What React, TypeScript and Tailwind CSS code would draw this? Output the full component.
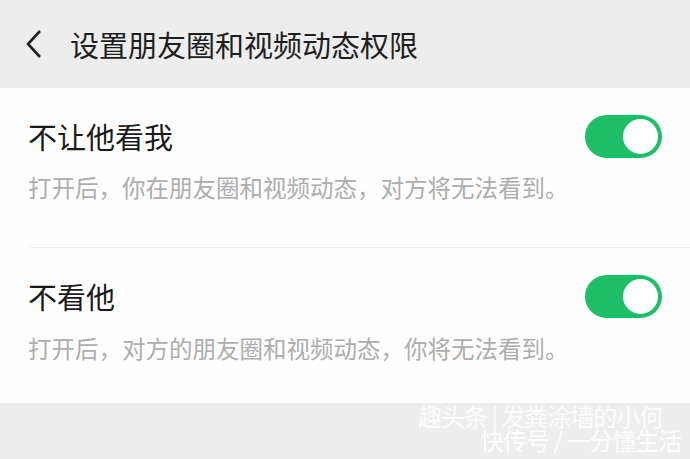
import React from "react";

const font = { fontFamily: '"Noto Sans CJK SC", "Noto Sans", sans-serif' };

function Toggle() {
  return (
    <div className="relative w-[77px] h-[43px] rounded-full bg-[#1dbf68]">
      <div className="absolute right-[2px] top-[2px] w-[39px] h-[39px] rounded-full bg-white border-[2px] border-[#1dbf68]" />
    </div>
  );
}

function Row({ title, desc }: { title: string; desc: string }) {
  return (
    <div className="pl-[28px] pr-[28px]">
      <div className="flex items-center justify-between h-[44px]">
        <span className="text-[29px] leading-none text-[#1a1a1a]">{title}</span>
        <Toggle />
      </div>
      <div className="mt-[18px] text-[23.5px] leading-none text-[#adadad]">{desc}</div>
    </div>
  );
}

export default function App() {
  return (
    <div className="w-[690px] h-[459px] bg-[#ededed] overflow-hidden relative" style={font}>
      <div className="h-[88px] flex items-center pl-[24px]">
        <svg width="20" height="30" viewBox="0 0 20 30" className="mr-[26px]">
          <path d="M16 2 L4 15 L16 28" fill="none" stroke="#222" strokeWidth="2.6" />
        </svg>
        <span className="text-[29px] leading-none text-[#1e1e1e]">设置朋友圈和视频动态权限</span>
      </div>
      <div className="bg-[#fefefe] h-[315px] flex flex-col">
        <div className="pt-[26px]">
          <Row title="不让他看我" desc="打开后，你在朋友圈和视频动态，对方将无法看到。" />
        </div>
        <div className="mt-[47px] ml-[30px] h-[1px] bg-[#ececec]" />
        <div className="pt-[27px]">
          <Row title="不看他" desc="打开后，对方的朋友圈和视频动态，你将无法看到。" />
        </div>
      </div>
      <div className="absolute left-[418px] top-[404px] text-[24px] leading-none text-white whitespace-nowrap tracking-[-1px] opacity-90">趣头条 | 发粪涂墙的小何</div>
      <div className="absolute left-[480px] top-[428px] text-[24px] leading-none text-white whitespace-nowrap tracking-[-1px] opacity-90">快传号 / 一分懂生活</div>
    </div>
  );
}
